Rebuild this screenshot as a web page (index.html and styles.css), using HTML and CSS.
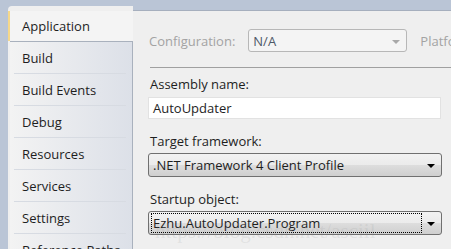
FILE: index.html
```html
<!DOCTYPE html>
<html lang="en">
<head>
<meta charset="UTF-8" />
<title>Project Properties</title>
<link rel="stylesheet" href="styles.css">
</head>
<body>

<div class="window">
  <!-- left tab column -->
  <nav class="tabs">
    <div class="tab active">Application</div>
    <ul class="tab-list">
      <li>Build</li>
      <li>Build Events</li>
      <li>Debug</li>
      <li>Resources</li>
      <li>Services</li>
      <li>Settings</li>
      <li>Reference Paths</li>
    </ul>
  </nav>

  <!-- property page -->
  <main class="page">
    <div class="config-row">
      <span class="muted">Configuration:</span>
      <div class="select disabled">
        <span>N/A</span>
        <span class="arrow"></span>
      </div>
      <span class="muted">Platform:</span>
    </div>

    <div class="rule"></div>

    <label class="field-label first">Assembly name:</label>
    <div class="textbox">AutoUpdater</div>

    <label class="field-label">Target framework:</label>
    <div class="select combo">
      <span>.NET Framework 4 Client Profile</span>
      <span class="arrow"></span>
    </div>

    <label class="field-label">Startup object:</label>
    <div class="select combo focused">
      <span class="focus-box">Ezhu.AutoUpdater.Program</span>
      <span class="arrow"></span>
      <span class="watermark">https://blog.csdn.net/asciil</span>
    </div>
  </main>
</div>

</body>
</html>
```

FILE: styles.css
```css
/* Base */
body {
  margin: 0;
  background: #bac5d6;
  font-family: 'Open Sans', 'Noto Sans', sans-serif;
  font-size: 12px;
  color: #1e1e1e;
  overflow: hidden;
}

.window {
  display: flex;
  height: 249px;
  padding: 6px 0 0 8px;
  box-sizing: border-box;
}

/* Tab column */
.tabs {
  width: 125px;
  flex-shrink: 0;
  display: flex;
  flex-direction: column;
  background: #efefef;
  border-top-left-radius: 4px;
  padding-top: 5px;
}

.tab {
  height: 30px;
  line-height: 30px;
  padding-left: 12px;
  border-left: 2px solid #f6d88a;
  background: #f4f4f4;
  font-size: 13px;
}

.tab-list {
  list-style: none;
  margin: 0 0 0 2px;
  padding: 0 6px 0 4px;
  flex: 1;
  border-top: 1px solid #a9b1bd;
  border-right: 1px solid #a9b1bd;
  background: linear-gradient(to right, #f3f3f3, #dce0e8);
}

.tab-list li {
  height: 31px;
  line-height: 32px;
  padding-left: 8px;
  border-bottom: 1px solid #d7dbe2;
  font-size: 13px;
}

/* Page */
.page {
  flex: 1;
  background: #efefef;
  border-top: 1px solid #a6afbe;
  margin-top: 4px;
  padding: 18px 0 0 16px;
  display: flex;
  flex-direction: column;
  align-items: flex-start;
}

.config-row {
  display: flex;
  align-items: center;
  gap: 13px;
  white-space: nowrap;
}

.muted {
  color: #a3a3a3;
  font-size: 13px;
}

.rule {
  align-self: stretch;
  height: 1px;
  background: #a0a0a0;
  margin: 15px 0 0 1px;
}

.field-label {
  font-size: 13px;
  line-height: 16px;
  margin: 14px 0 4px 1px;
}

.field-label.first {
  margin-top: 8px;
  margin-bottom: 5px;
}

.textbox {
  box-sizing: border-box;
  width: 293px;
  height: 22px;
  line-height: 20px;
  padding-left: 4px;
  margin-left: -1px;
  background: #fff;
  border: 1px solid #e2e2e2;
  font-size: 13px;
}

.select {
  position: relative;
  display: flex;
  align-items: center;
  box-sizing: border-box;
  height: 24px;
  padding-left: 4px;
  border-radius: 3px;
  font-size: 13px;
}

.select .arrow {
  position: absolute;
  right: 6px;
  top: 10px;
  border-left: 4px solid transparent;
  border-right: 4px solid transparent;
  border-top: 4px solid #000;
}

.select.disabled {
  width: 159px;
  height: 23px;
  background: #f4f4f4;
  border: 1px solid #b7b7b7;
  color: #4e5866;
}

.select.disabled .arrow {
  border-top-color: #a8a8a8;
}

.select.combo {
  width: 294px;
  margin-left: -1px;
  border: 1px solid #707070;
  background: linear-gradient(#f2f2f2 0%, #ebebeb 50%, #dddddd 51%, #cfcfcf 100%);
}

.select.focused {
  padding-left: 2px;
}

.focus-box {
  border: 1px dotted #000;
  width: 268px;
  height: 18px;
  line-height: 18px;
  padding-left: 1px;
}

.watermark {
  position: absolute;
  left: 6px;
  top: 7px;
  font-family: 'Liberation Serif', serif;
  font-size: 21px;
  color: rgba(140, 140, 140, 0.14);
  white-space: nowrap;
  pointer-events: none;
}
```
